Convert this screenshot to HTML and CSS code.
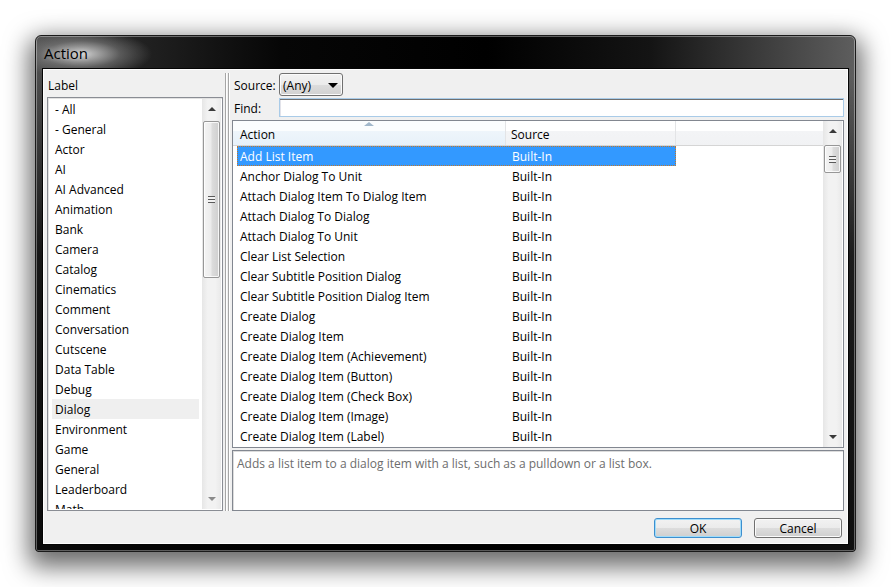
FILE: index.html
```html
<!DOCTYPE html>
<html>
<head>
<meta charset="utf-8">
<title>Action</title>
<link rel="stylesheet" href="styles.css">
</head>
<body>
<div class="window">
  <div class="titlebar"><span class="title">Action</span></div>
  <div class="client">
    <div class="main">
      <div class="leftpane">
        <div class="pane-label">Label</div>
        <div class="listbox">
          <ul class="items">
            <li>- All</li>
            <li>- General</li>
            <li>Actor</li>
            <li>AI</li>
            <li>AI Advanced</li>
            <li>Animation</li>
            <li>Bank</li>
            <li>Camera</li>
            <li>Catalog</li>
            <li>Cinematics</li>
            <li>Comment</li>
            <li>Conversation</li>
            <li>Cutscene</li>
            <li>Data Table</li>
            <li>Debug</li>
            <li class="hl">Dialog</li>
            <li>Environment</li>
            <li>Game</li>
            <li>General</li>
            <li>Leaderboard</li>
            <li>Math</li>
          </ul>
          <div class="vscroll left-sb">
            <div class="sb-btn"><span class="tri-up"></span></div>
            <div class="sb-thumb"><span class="grip"></span></div>
            <div class="sb-track"></div>
            <div class="sb-btn"><span class="tri-down light"></span></div>
          </div>
        </div>
      </div>
      <div class="splitter"></div>
      <div class="rightpane">
        <div class="field-row source-row">
          <span class="field-label">Source:</span>
          <div class="combo"><span class="combo-text">(Any)</span><span class="combo-arrow"></span></div>
        </div>
        <div class="field-row find-row">
          <span class="field-label">Find:</span>
          <div class="textbox"></div>
        </div>
        <div class="listview">
          <div class="lv-body">
            <div class="lv-header">
              <div class="hcell c1">Action<span class="sort-arrow"></span></div>
              <div class="hcell c2">Source</div>
              <div class="hcell c3"></div>
            </div>
            <div class="lv-rows">
              <div class="lv-row sel"><span class="r1">Add List Item</span><span class="r2">Built-In</span></div>
              <div class="lv-row"><span class="r1">Anchor Dialog To Unit</span><span class="r2">Built-In</span></div>
              <div class="lv-row"><span class="r1">Attach Dialog Item To Dialog Item</span><span class="r2">Built-In</span></div>
              <div class="lv-row"><span class="r1">Attach Dialog To Dialog</span><span class="r2">Built-In</span></div>
              <div class="lv-row"><span class="r1">Attach Dialog To Unit</span><span class="r2">Built-In</span></div>
              <div class="lv-row"><span class="r1">Clear List Selection</span><span class="r2">Built-In</span></div>
              <div class="lv-row"><span class="r1">Clear Subtitle Position Dialog</span><span class="r2">Built-In</span></div>
              <div class="lv-row"><span class="r1">Clear Subtitle Position Dialog Item</span><span class="r2">Built-In</span></div>
              <div class="lv-row"><span class="r1">Create Dialog</span><span class="r2">Built-In</span></div>
              <div class="lv-row"><span class="r1">Create Dialog Item</span><span class="r2">Built-In</span></div>
              <div class="lv-row"><span class="r1">Create Dialog Item (Achievement)</span><span class="r2">Built-In</span></div>
              <div class="lv-row"><span class="r1">Create Dialog Item (Button)</span><span class="r2">Built-In</span></div>
              <div class="lv-row"><span class="r1">Create Dialog Item (Check Box)</span><span class="r2">Built-In</span></div>
              <div class="lv-row"><span class="r1">Create Dialog Item (Image)</span><span class="r2">Built-In</span></div>
              <div class="lv-row"><span class="r1">Create Dialog Item (Label)</span><span class="r2">Built-In</span></div>
            </div>
          </div>
          <div class="vscroll right-sb">
            <div class="sb-btn"><span class="tri-up"></span></div>
            <div class="sb-thumb"><span class="grip"></span></div>
            <div class="sb-track"></div>
            <div class="sb-btn"><span class="tri-down"></span></div>
          </div>
        </div>
        <div class="desc">Adds a list item to a dialog item with a list, such as a pulldown or a list box.</div>
      </div>
    </div>
    <div class="buttons">
      <button class="btn default">OK</button>
      <button class="btn">Cancel</button>
    </div>
  </div>
</div>
</body>
</html>
```

FILE: styles.css
```css
html, body {
  margin: 0;
  background: #ffffff;
}
body {
  padding: 35px;
  font-family: "Open Sans", "Noto Sans", sans-serif;
  font-size: 12px;
  color: #000;
}

.window {
  width: 821px;
  height: 517px;
  box-sizing: border-box;
  border: 1px solid #1a1a1a;
  border-radius: 6px 6px 3px 3px;
  padding: 0 6px 6px 6px;
  display: flex;
  flex-direction: column;
  background:
    radial-gradient(70px 24px at 46px 18px, rgba(215,215,215,0.95), rgba(140,140,140,0.5) 55%, rgba(0,0,0,0) 100%),
    linear-gradient(to bottom, rgba(0,0,0,0) 0, rgba(0,0,0,0) 40px, rgba(0,0,0,0.7) 220px, rgba(0,0,0,0.85) 100%),
    linear-gradient(to right, #4e4e4e 0%, #262626 10%, #060606 30%, #000 55%, #141414 75%, #5e5e5e 100%);
  box-shadow:
    inset 0 0 0 1px rgba(255,255,255,0.35),
    0 9px 24px 6px rgba(0,0,0,0.58);
}

.titlebar {
  height: 32px;
  display: flex;
  align-items: center;
  padding: 2px 0 0 2px;
  box-sizing: border-box;
}
.title {
  font-size: 15px;
  color: #000;
  text-shadow: 0 0 6px rgba(255,255,255,0.5);
}

.client {
  flex: 1;
  display: flex;
  flex-direction: column;
  background: #f0f0f0;
  border: 1px solid #050505;
  box-shadow: inset 0 0 0 1px #fdfdfd;
  min-height: 0;
}

.main {
  flex: 1;
  display: flex;
  padding: 4px 4px 0 4px;
  min-height: 0;
}

/* left pane */
.leftpane {
  width: 176px;
  display: flex;
  flex-direction: column;
}
.pane-label {
  padding: 3px 0 1px 1px;
  line-height: 20px;
}
.listbox {
  flex: 1;
  display: flex;
  border: 1px solid #8a8d94;
  box-shadow: inset 1px 1px 0 #e2e2e2;
  background: #fff;
  padding: 1px;
  min-height: 0;
}
.items {
  flex: 1;
  list-style: none;
  margin: 0;
  padding: 0;
  overflow: hidden;
}
.items li {
  height: 20px;
  box-sizing: border-box;
  padding-top: 1px;
  line-height: 20px;
  padding-left: 3px;
  margin: 0 3px;
  white-space: nowrap;
}
.items li.hl {
  background: #efefef;
}

.splitter {
  width: 9px;
  background: linear-gradient(to right,
    transparent 0, transparent 2px,
    #a6a6a6 2px, #a6a6a6 3px,
    #ffffff 3px, #ffffff 4px,
    transparent 4px, transparent 5px,
    #a6a6a6 5px, #a6a6a6 6px,
    #ffffff 6px, #ffffff 7px,
    transparent 7px);
}

/* scrollbars */
.vscroll {
  width: 19px;
  display: flex;
  flex-direction: column;
  background: linear-gradient(to right, #e6e6e6, #f2f2f2 30%, #f2f2f2 70%, #e9e9e9);
}
.sb-btn {
  height: 20px;
  display: flex;
  align-items: center;
  justify-content: center;
  flex: none;
}
.tri-up {
  width: 0;
  height: 0;
  border-left: 4px solid transparent;
  border-right: 4px solid transparent;
  border-bottom: 4px solid #3a3a3a;
}
.tri-down {
  width: 0;
  height: 0;
  border-left: 4px solid transparent;
  border-right: 4px solid transparent;
  border-top: 4px solid #3a3a3a;
}
.tri-down.light {
  border-top-color: #8a8a8a;
}
.sb-thumb {
  flex: none;
  margin: 2px 1px 0 1px;
  box-sizing: border-box;
  border: 1px solid #979797;
  border-radius: 2px;
  background: linear-gradient(to right, #f4f4f4 0, #ececec 45%, #dcdcdc 55%, #cfcfcf 100%);
  box-shadow: inset 0 0 0 1px rgba(255,255,255,0.8);
  display: flex;
  align-items: center;
  justify-content: center;
}
.grip {
  width: 7px;
  height: 7px;
  background: repeating-linear-gradient(to bottom, #5a5a5a 0, #5a5a5a 1px, #f2f2f2 1px, #f2f2f2 3px);
}
.sb-track {
  flex: 1;
}
.left-sb .sb-thumb {
  height: 157px;
}
.right-sb {
  margin: 0 1px 0 0;
}
.right-sb .sb-thumb {
  margin-top: 4px;
  height: 28px;
}

/* right pane */
.rightpane {
  flex: 1;
  display: flex;
  flex-direction: column;
  min-width: 0;
}
.field-row {
  display: flex;
  align-items: center;
}
.field-label {
  width: 45px;
  padding: 2px 0 0 2px;
  flex: none;
}
.source-row {
  height: 23px;
}
.combo {
  width: 64px;
  height: 23px;
  box-sizing: border-box;
  border: 1px solid #707070;
  border-radius: 3px;
  background: linear-gradient(to bottom, #f2f2f2 0, #ebebeb 50%, #dddddd 50%, #d1d1d1 100%);
  box-shadow: inset 0 0 0 1px #fbfbfb;
  display: flex;
  align-items: center;
  justify-content: space-between;
  padding: 1px 4px 0 3px;
}
.combo-arrow {
  width: 0;
  height: 0;
  border-left: 5px solid transparent;
  border-right: 5px solid transparent;
  border-top: 5px solid #000;
}
.find-row {
  height: 20px;
  margin-top: 1px;
}
.textbox {
  flex: 1;
  height: 19px;
  box-sizing: border-box;
  background: #fff;
  border: 1px solid #a9cbe8;
  box-shadow: inset 0 1px 0 #6f6f6f, inset 1px 0 0 #e2e3ea;
}

.listview {
  margin-top: 3px;
  flex: 1;
  min-height: 0;
  display: flex;
  border: 1px solid #828790;
  background: #fff;
}
.lv-body {
  flex: 1;
  min-width: 0;
  overflow: hidden;
}
.lv-header {
  height: 25px;
  box-sizing: border-box;
  display: flex;
  border-bottom: 1px solid #d5d5d5;
  background: linear-gradient(to bottom, #ffffff 0, #ffffff 42%, #f3f4f6 42%, #f1f2f4 100%);
}
.hcell {
  height: 24px;
  box-sizing: border-box;
  padding-top: 2px;
  line-height: 24px;
  white-space: nowrap;
}
.hcell.c1 {
  width: 273px;
  padding-left: 7px;
  border-right: 1px solid #e3e4e6;
  position: relative;
  background: linear-gradient(to bottom, #fbfdfe 0, #fbfdfe 42%, #eef5fb 42%, #e8f1f9 100%);
}
.sort-arrow {
  position: absolute;
  top: 1px;
  left: 131px;
  width: 0;
  height: 0;
  border-left: 5px solid transparent;
  border-right: 5px solid transparent;
  border-bottom: 4px solid #a2b8cb;
}
.hcell.c2 {
  width: 170px;
  padding-left: 5px;
  border-right: 1px solid #e3e4e6;
}
.hcell.c3 {
  flex: 1;
}
.lv-row {
  height: 20px;
  box-sizing: border-box;
  padding-top: 1px;
  line-height: 19px;
  margin-left: 4px;
  width: 439px;
  display: flex;
  white-space: nowrap;
}
.lv-row .r1 {
  width: 269px;
  padding-left: 3px;
  box-sizing: border-box;
}
.lv-row .r2 {
  width: 170px;
  padding-left: 6px;
  box-sizing: border-box;
}
.lv-row.sel {
  background: #3399ff;
  color: #fff;
  outline: 1px dotted #c0772c;
  outline-offset: -1px;
}

.desc {
  margin-top: 2px;
  height: 61px;
  box-sizing: border-box;
  border: 1px solid #828790;
  box-shadow: inset 1px 1px 0 #dcdcdc;
  background: #fff;
  padding: 4px 4px 2px 4px;
  line-height: 18px;
  color: #6d6d6d;
  flex: none;
}

/* buttons */
.buttons {
  display: flex;
  justify-content: flex-end;
  gap: 12px;
  padding: 7px 6px 6px 0;
}
.btn {
  width: 88px;
  height: 20px;
  padding: 1px 0 0 0;
  font-family: inherit;
  font-size: 12px;
  line-height: 18px;
  color: #000;
  border: 1px solid #707070;
  border-radius: 3px;
  background: linear-gradient(to bottom, #f2f2f2 0, #ebebeb 50%, #dddddd 50%, #cfcfcf 100%);
  box-shadow: inset 0 0 0 1px #fbfbfb;
}
.btn.default {
  border-color: #3c8fcf;
  box-shadow: inset 0 0 0 1px #9fdcfa;
}
```
